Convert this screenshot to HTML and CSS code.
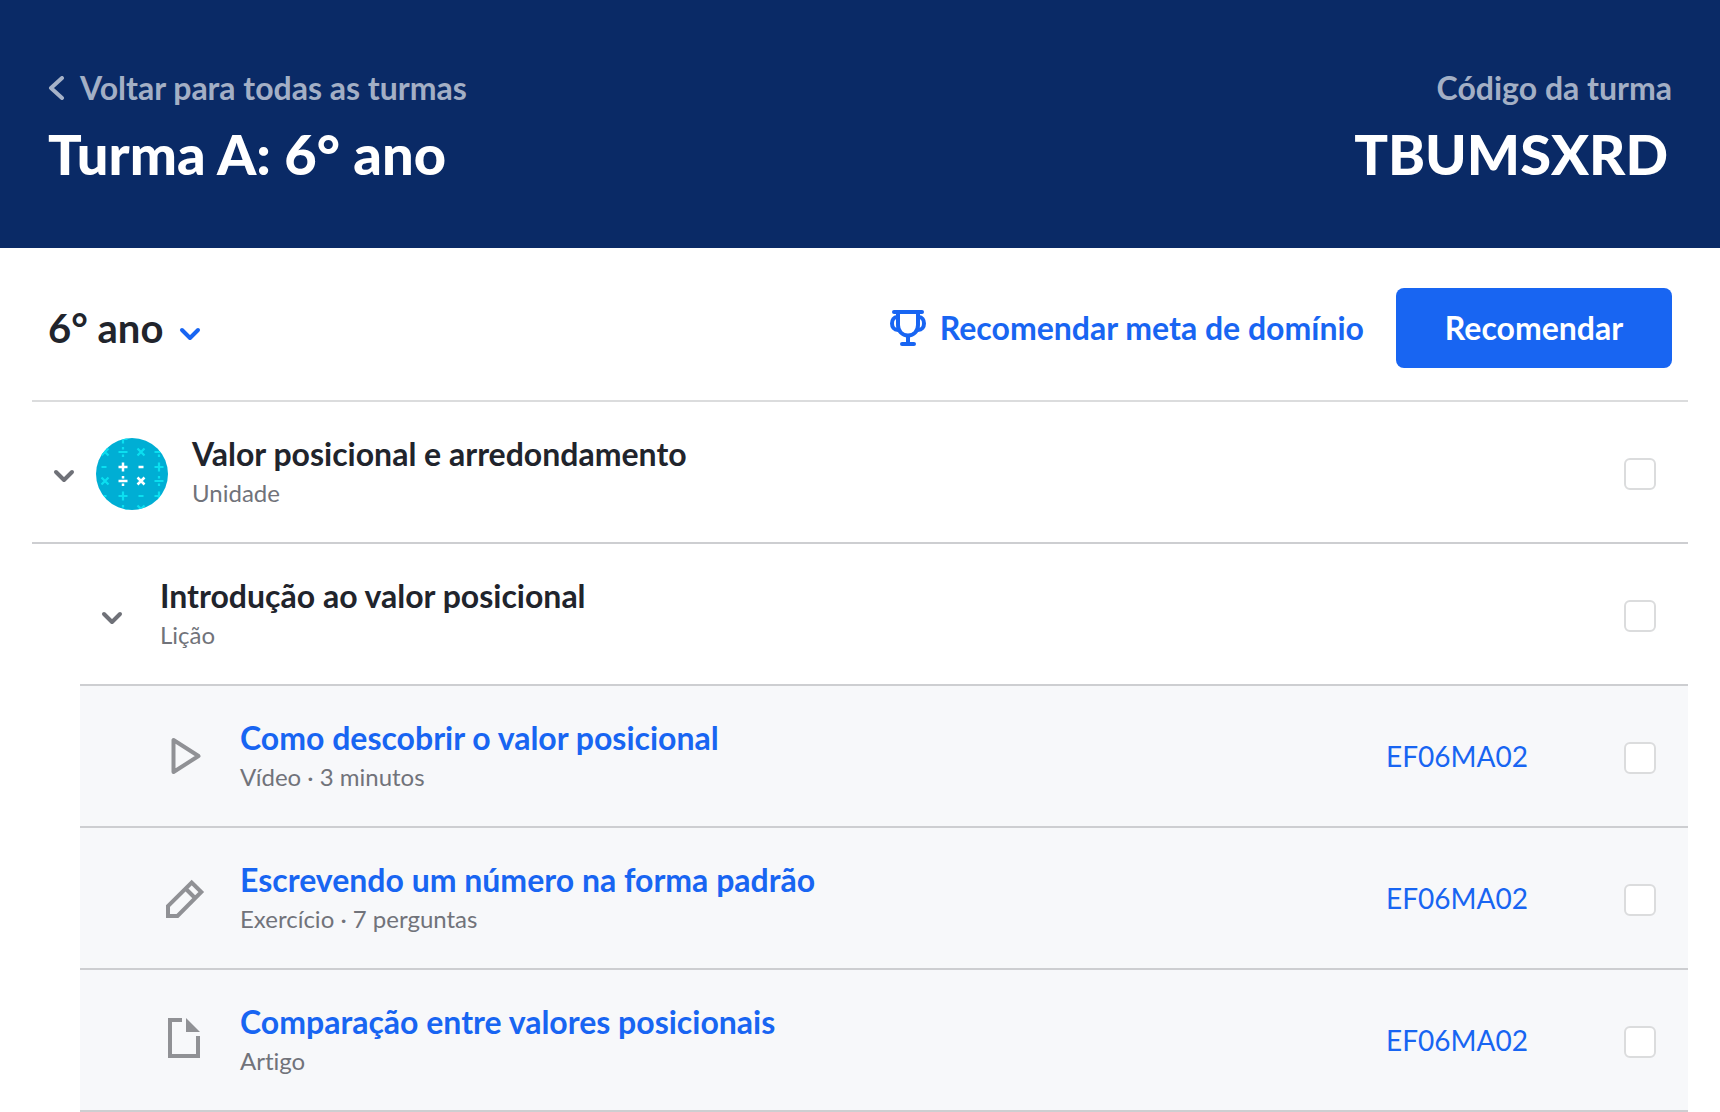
FILE: index.html
```
<!DOCTYPE html>
<html lang="pt-BR">
<head>
    <meta charset="UTF-8">
    <meta name="viewport" content="width=device-width, initial-scale=1.0">
    <title>Turma A: 6° ano</title>

    <link rel="stylesheet" href="styles.css">
</head>
<body>
    <!-- shapes used more than once -->
    <svg class="defs" width="0" height="0" aria-hidden="true">
        <symbol id="chevron" viewBox="0 0 24 24">
            <path d="M4 10l8 8 8-8" fill="none" stroke="currentColor" stroke-width="4" stroke-linecap="round" stroke-linejoin="round"/>
        </symbol>
        <g id="plus"><path d="M-4.500 0H4.500M0-4.500V4.500"/></g>
        <g id="minus"><path d="M-2.500 0H2.500"/></g>
        <g id="times"><path d="M-3.500-3.500L3.500 3.500M3.500-3.500L-3.500 3.500"/></g>
        <g id="divide"><path d="M-4.500 0H4.500M0-5V-2.500M0 2.500V5"/></g>
    </svg>

    <header class="header">
        <div class="header-class">
            <a class="header-label" href="#">
                <svg class="back-icon" viewBox="0 0 24 24" aria-hidden="true">
                    <path d="M14 2L3 12L14 22" fill="none" stroke="currentColor" stroke-width="4" stroke-linecap="round" stroke-linejoin="round"/>
                </svg>
                Voltar para todas as turmas
            </a>
            <h1 class="header-title">Turma A: 6° ano</h1>
        </div>
        <div class="header-code">
            <p class="header-label">Código da turma</p>
            <p class="header-title code-value">TBUMSXRD</p>
        </div>
    </header>

    <main class="content">
        <div class="toolbar">
            <div class="grade">
                <select class="grade-select" aria-label="Ano">
                    <option>6° ano</option>
                </select>
                <svg class="grade-icon" viewBox="0 0 24 32" aria-hidden="true">
                    <path d="M4 18l8 8 8-8" fill="none" stroke="currentColor" stroke-width="4" stroke-linecap="round" stroke-linejoin="round"/>
                </svg>
            </div>
            <div class="actions">
                <button class="btn-link" type="button">
                    <svg class="trophy-icon" viewBox="0 0 40 40" fill="none" stroke="currentColor" stroke-width="4" stroke-linecap="round" aria-hidden="true">
                        <path d="M6 4H34"/>
                        <path d="M10 4V17C10 23 14 27.500 20 27.500S30 23 30 17V4"/>
                        <path d="M9 9C6 9 4 12 4 15.500S6 22 10 22"/>
                        <path d="M31 9C34 9 36 12 36 15.500S34 22 30 22"/>
                        <path d="M20 28V36M14 36H26"/>
                    </svg>
                    Recomendar meta de domínio
                </button>
                <button class="btn-primary" type="button">Recomendar</button>
            </div>
        </div>

        <ul class="list">
            <li>
                <div class="row row-unit">
                    <button class="toggle" type="button" aria-label="Recolher unidade">
                        <svg class="chevron"><use href="#chevron"/></svg>
                    </button>
                    <svg class="unit-icon" viewBox="0 0 72 72" aria-hidden="true">
                        <clipPath id="circle"><circle cx="36" cy="36" r="36"/></clipPath>
                        <g clip-path="url(#circle)">
                            <rect width="72" height="72" fill="#00aed4"/>
                            <g fill="none" stroke="#0bdff0" stroke-width="2.200">
                                <use href="#plus" x="27" y="1"/>
                                <use href="#times" x="9" y="14"/>
                                <use href="#divide" x="27" y="14"/>
                                <use href="#times" x="45" y="14"/>
                                <use href="#divide" x="63" y="14"/>
                                <use href="#minus" x="8" y="29"/>
                                <use href="#plus" x="63" y="29"/>
                                <use href="#times" x="9" y="43"/>
                                <use href="#divide" x="63" y="43"/>
                                <use href="#minus" x="8" y="58"/>
                                <use href="#plus" x="27" y="58"/>
                                <use href="#minus" x="45" y="58"/>
                                <use href="#plus" x="63" y="58"/>
                                <use href="#divide" x="27" y="72"/>
                                <use href="#times" x="45" y="71"/>
                            </g>
                            <g fill="none" stroke="#fff" stroke-width="2.500">
                                <use href="#plus" x="27" y="29"/>
                                <use href="#minus" x="45" y="29"/>
                                <use href="#divide" x="27" y="43"/>
                                <use href="#times" x="45" y="43"/>
                            </g>
                        </g>
                    </svg>
                    <div class="info">
                        <label class="name" for="unit">Valor posicional e arredondamento</label>
                        <span class="type">Unidade</span>
                    </div>
                    <input class="check" type="checkbox" id="unit">
                </div>

                <ul class="list nested">
                    <li>
                        <div class="row row-lesson">
                            <button class="toggle" type="button" aria-label="Recolher lição">
                                <svg class="chevron"><use href="#chevron"/></svg>
                            </button>
                            <div class="info">
                                <label class="name" for="lesson">Introdução ao valor posicional</label>
                                <span class="type">Lição</span>
                            </div>
                            <input class="check" type="checkbox" id="lesson">
                        </div>

                        <ul class="list">
                            <li class="row row-item">
                                <svg class="item-icon" viewBox="0 0 48 48" aria-hidden="true">
                                    <path d="M13.500 6V38L38.500 22Z" fill="none" stroke="currentColor" stroke-width="4" stroke-linejoin="round"/>
                                </svg>
                                <div class="info">
                                    <a class="name" href="#">Como descobrir o valor posicional</a>
                                    <span class="type">Vídeo · 3 minutos</span>
                                </div>
                                <a class="standard" href="#">EF06MA02</a>
                                <input class="check" type="checkbox" aria-label="Como descobrir o valor posicional">
                            </li>
                            <li class="row row-item">
                                <svg class="item-icon" viewBox="0 0 48 48" aria-hidden="true">
                                    <path d="M8 40V30L31.700 6.500L41.300 16L17.500 40ZM25.500 12.500L35 22" fill="none" stroke="currentColor" stroke-width="4"/>
                                </svg>
                                <div class="info">
                                    <a class="name" href="#">Escrevendo um número na forma padrão</a>
                                    <span class="type">Exercício · 7 perguntas</span>
                                </div>
                                <a class="standard" href="#">EF06MA02</a>
                                <input class="check" type="checkbox" aria-label="Escrevendo um número na forma padrão">
                            </li>
                            <li class="row row-item">
                                <svg class="item-icon" viewBox="0 0 48 48" aria-hidden="true">
                                    <path d="M22 2H10V38H38V18" fill="none" stroke="currentColor" stroke-width="4"/>
                                    <path d="M26 0L40 14H26Z" fill="currentColor"/>
                                </svg>
                                <div class="info">
                                    <a class="name" href="#">Comparação entre valores posicionais</a>
                                    <span class="type">Artigo</span>
                                </div>
                                <a class="standard" href="#">EF06MA02</a>
                                <input class="check" type="checkbox" aria-label="Comparação entre valores posicionais">
                            </li>
                        </ul>
                    </li>
                </ul>
            </li>
        </ul>
    </main>
</body>
</html>
```
FILE: styles.css
```
* {
    box-sizing: border-box;
}

body {
    margin: 0;
    background-color: #fff;
    color: #21242c;
    font-family: Lato, "Open Sans", sans-serif;
    font-size: 32px;
    font-variant-ligatures: none;
    line-height: 40px;
}

h1, p, ul {
    margin: 0;
    padding: 0;
}

a {
    color: #1865f2;
    text-decoration: none;
}

button, select {
    margin: 0;
    padding: 0;
    border: none;
    background: none;
    color: inherit;
    font: inherit;
    cursor: pointer;
}

svg {
    display: block;
    flex-shrink: 0;
}

.defs {
    position: absolute;
}

/* header */
.header {
    display: flex;
    justify-content: space-between;
    padding: 68px 48px 60px;
    background-color: #0a2a66;
    color: #fff;
}

.header-class, .header-code {
    display: flex;
    flex-direction: column;
    gap: 12px;
}

.header-code {
    align-items: flex-end;
}

.header-label {
    display: flex;
    align-items: center;
    gap: 8px;
    color: rgba(255, 255, 255, 0.64);
    font-weight: 700;
}

.back-icon {
    width: 24px;
    height: 24px;
}

.header-title {
    font-family: "Lato Black", Lato, sans-serif;
    font-size: 56px;
    font-weight: 900;
    line-height: 68px;
}

.code-value {
    padding-right: 4px;
}

/* toolbar */
.content {
    padding: 0 32px;
}

.toolbar {
    display: flex;
    align-items: center;
    justify-content: space-between;
    padding: 40px 16px 32px;
    border-bottom: 2px solid #dbdcdd;
}

.grade {
    display: flex;
    align-items: center;
    gap: 14px;
}

.grade-select {
    appearance: none;
    font-size: 40px;
    font-weight: 700;
    line-height: 48px;
}

.grade-icon {
    width: 24px;
    height: 32px;
    color: #1865f2;
    pointer-events: none;
}

.actions {
    display: flex;
    align-items: center;
    gap: 32px;
}

.btn-link {
    display: flex;
    align-items: center;
    gap: 12px;
    color: #1865f2;
    font-weight: 700;
}

.trophy-icon {
    width: 40px;
    height: 40px;
}

.btn-primary {
    min-width: 276px;
    padding: 20px 48px;
    border-radius: 8px;
    background-color: #1865f2;
    color: #fff;
    font-weight: 700;
}

/* content list */
.list {
    list-style: none;
}

.nested {
    margin-left: 48px;
}

.row {
    display: flex;
    align-items: center;
    min-height: 142px;
    padding: 32px 32px 28px 20px;
    border-bottom: 2px solid #cdced1;
}

.row-unit {
    gap: 24px;
}

.row-lesson {
    gap: 36px;
}

.row-item {
    gap: 32px;
    padding-left: 80px;
    background-color: #f7f8fa;
}

.toggle {
    color: #6f7178;
}

.row-unit .toggle {
    margin-right: -4px;
}

.chevron {
    width: 24px;
    height: 24px;
}

.unit-icon {
    width: 72px;
    height: 72px;
}

.item-icon {
    width: 48px;
    height: 48px;
    color: #909195;
}

.info {
    display: flex;
    flex: 1;
    flex-direction: column;
    align-items: flex-start;
    align-self: flex-start;
    gap: 4px;
}

.name {
    font-weight: 700;
}

.type {
    color: #71737a;
    font-size: 24px;
    line-height: 30px;
}

.standard {
    margin-right: 64px;
    padding-bottom: 4px;
    font-size: 28px;
    line-height: 32px;
}

.check {
    appearance: none;
    width: 32px;
    height: 32px;
    margin: 0;
    border: 2px solid #dbdcdd;
    border-radius: 6px;
    background-color: #fff;
    cursor: pointer;
}

.check:checked {
    border-color: #1865f2;
    background-color: #1865f2;
}
```
